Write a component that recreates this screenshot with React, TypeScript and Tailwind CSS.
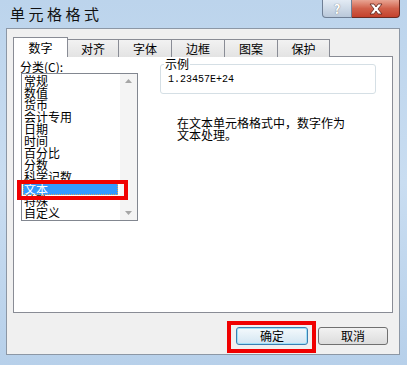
const items = ["常规", "数值", "货币", "会计专用", "日期", "时间", "百分比", "分数", "科学记数", "文本", "特殊", "自定义"];
const tabs = [
  { label: "数字", w: "w-[55px]" },
  { label: "对齐", w: "w-[52px]" },
  { label: "字体", w: "w-[54px]" },
  { label: "边框", w: "w-[54px]" },
  { label: "图案", w: "w-[54px]" },
  { label: "保护", w: "w-[53px]" },
];

export default function App() {
  return (
    <div className="w-[407px] h-[365px] flex flex-col bg-gradient-to-b from-[#bcd4ec] via-[#c9ddf1] to-[#b7d0ea] font-['Noto_Sans_CJK_SC',sans-serif] text-[12px] text-black overflow-hidden">
      {/* title bar */}
      <div className="h-[28px] flex items-start justify-between shrink-0">
        <span className="ml-[10px] mt-[5px] text-[15px] leading-[17px] tracking-[3.5px] text-[#111]">
          单元格格式
        </span>
        <div className="flex mr-[7px]">
          <div className="w-[30px] h-[18px] rounded-bl-[4px] border border-[#6f7f95] border-t-0 bg-gradient-to-b from-[#e3ebf4] to-[#b9c8da] flex items-center justify-center text-[13px] font-bold leading-none text-white [text-shadow:0_0_1px_#555]">
            ?
          </div>
          <div className="w-[48px] h-[18px] rounded-br-[4px] border border-[#6a2a22] border-t-0 border-l-0 bg-gradient-to-b from-[#e8a493] via-[#d0604a] to-[#c4412c] flex items-center justify-center">
            <svg width="16" height="12" viewBox="0 0 16 12">
              <path d="M2 1 L6 1 L8 4 L10 1 L14 1 L10 6 L14 11 L10 11 L8 8 L6 11 L2 11 L6 6 Z" fill="#fff" stroke="#5a2018" strokeWidth="0.8" />
            </svg>
          </div>
        </div>
      </div>

      {/* client area */}
      <div className="flex-1 ml-[6px] mr-[7px] mb-[10px] border border-[#8c97a5] bg-[#f0f0f0] flex flex-col">
        <div className="ml-[6px] mt-[8px] w-[380px]">
          {/* tabs */}
          <div className="flex items-end h-[20px] relative z-10">
            {tabs.map((t, i) =>
              i === 0 ? (
                <div key={t.label} className={`${t.w} h-[20px] bg-white border border-b-0 border-[#898c95] flex items-center justify-center pt-[1px]`}>
                  {t.label}
                </div>
              ) : (
                <div key={t.label} className={`${t.w} h-[18px] -ml-px bg-gradient-to-b from-[#f2f2f2] to-[#e3e3e3] border border-b-0 border-[#898c95] flex items-center justify-center`}>
                  {t.label}
                </div>
              )
            )}
          </div>

          {/* tab panel */}
          <div className="-mt-px h-[257px] border border-[#898c95] bg-white flex pt-[3px]">
            <div className="ml-[6px] w-[118px] flex flex-col">
              <div className="h-[13px] leading-[13px]">
                分类(<span className="underline">C</span>):
              </div>
              <div className="ml-[1px] h-[148px] border border-[#828790] bg-white flex">
                <div className="flex-1 pt-[1px] relative">
                  {items.map((it) => (
                    <div
                      key={it}
                      className={
                        it === "文本"
                          ? "h-[12px] leading-[12px] ml-[1px] mr-[2px] bg-[#3399ff] text-white outline outline-1 outline-dotted outline-[#d9a35e] -outline-offset-1 pl-[1px]"
                          : "h-[12px] leading-[12px] pl-[2px]"
                      }
                    >
                      {it}
                    </div>
                  ))}
                  <div className="absolute left-[-5px] top-[106px] w-[111px] h-[20px] border-4 border-[#f00000]" />
                </div>
                <div className="w-[17px] bg-[#f4f4f4] flex flex-col justify-between items-center py-[5px]">
                  <svg width="7" height="4" viewBox="0 0 7 4">
                    <path d="M0 4 L3.5 0 L7 4 Z" fill="#a6a6a6" />
                  </svg>
                  <svg width="7" height="4" viewBox="0 0 7 4">
                    <path d="M0 0 L3.5 4 L7 0 Z" fill="#a6a6a6" />
                  </svg>
                </div>
              </div>
            </div>

            <div className="ml-[22px] w-[216px] flex flex-col">
              <div className="relative mt-[4px] h-[30px] border border-[#d5dfe5] rounded-[3px]">
                <span className="absolute left-[3px] -top-[8px] bg-white px-[1px] leading-[13px]">示例</span>
                <div className="mt-[9px] ml-[7px] font-['Liberation_Mono',monospace] text-[10px] leading-[12px]">1.23457E+24</div>
              </div>
              <div className="mt-[23px] ml-[17px] leading-[12px]">
                在文本单元格格式中，数字作为
                <br />
                文本处理。
              </div>
            </div>
          </div>

          {/* buttons */}
          <div className="flex justify-end mt-[14px] pr-[5px] gap-[10px]">
            <div className="relative">
              <div className="w-[72px] h-[18px] rounded-[3px] border border-[#3c7fb1] shadow-[0_0_0_1px_#9fe1f8_inset] bg-gradient-to-b from-[#f4f9fc] to-[#d3e6f2] flex items-center justify-center leading-none">
                确定
              </div>
              <div className="absolute left-[-9px] top-[-6px] w-[89px] h-[32px] border-4 border-[#f00000]" />
            </div>
            <div className="w-[70px] h-[18px] rounded-[3px] border border-[#707070] bg-gradient-to-b from-[#f2f2f2] to-[#dcdcdc] flex items-center justify-center leading-none">
              取消
            </div>
          </div>
        </div>
      </div>
    </div>
  );
}
